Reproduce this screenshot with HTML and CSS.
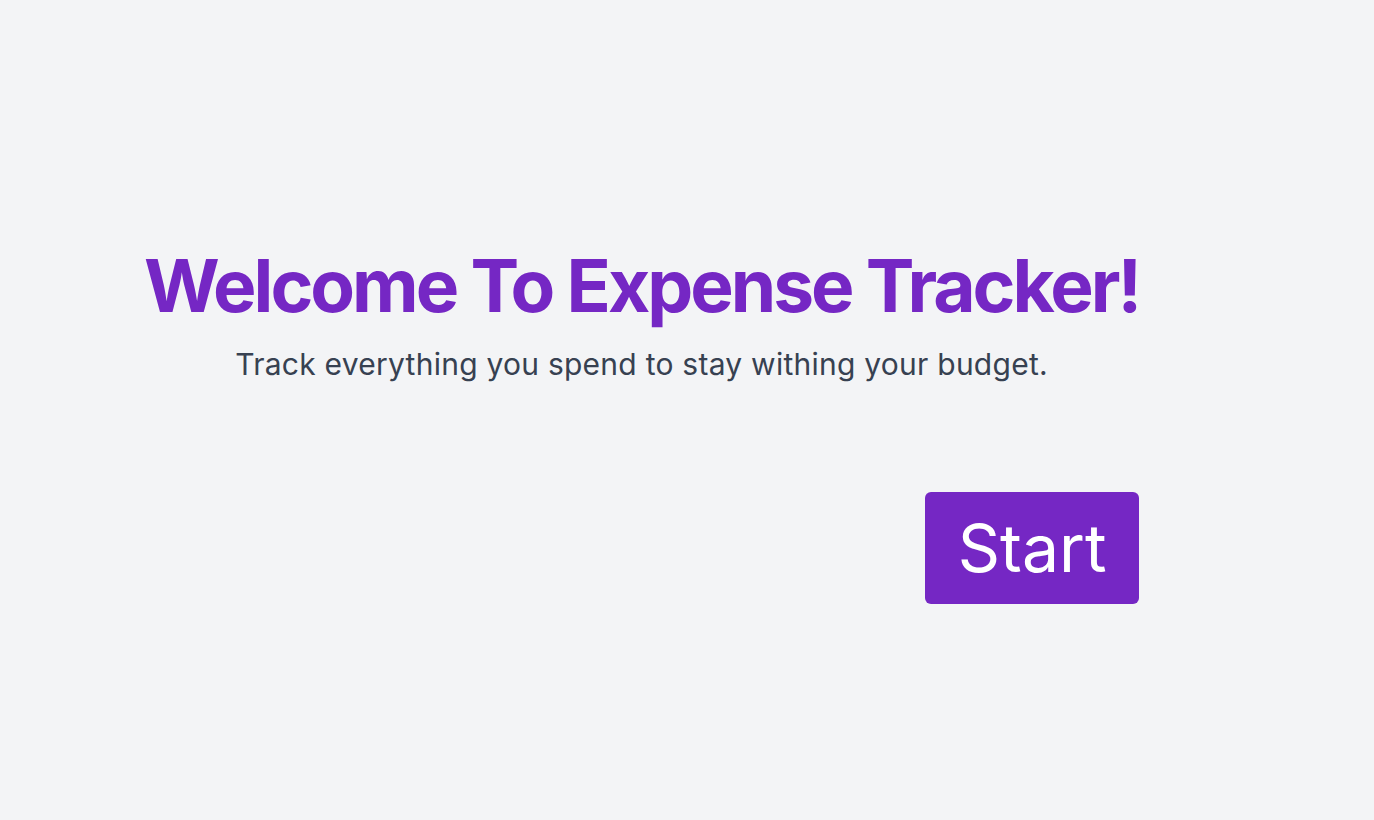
FILE: index.html
```html
<!DOCTYPE html>
<html lang="en">
<head>
<meta charset="utf-8">
<title>Expense Tracker</title>
<link rel="stylesheet" href="styles.css">
</head>
<body>
<main class="page">
  <section class="welcome">
    <h1 class="title">Welcome To Expense Tracker!</h1>
    <p class="subtitle">Track everything you spend to stay withing your budget.</p>
    <div class="actions">
      <button class="start-btn" type="button">Start</button>
    </div>
  </section>
</main>
</body>
</html>
```
FILE: styles.css
```css
html, body {
  margin: 0;
  padding: 0;
}
body {
  background: #f3f4f6;
  font-family: Inter, "Noto Sans", sans-serif;
  min-height: 820px;
}
.page {
  padding: 241px 0 0 144px;
}
.welcome {
  display: inline-flex;
  flex-direction: column;
  align-items: center;
}
.title {
  margin: 0;
  color: #7527c4;
  font-size: 73px;
  font-weight: 700;
  line-height: 90px;
  letter-spacing: -3px;
  white-space: nowrap;
}
.subtitle {
  margin: 13px 0 0;
  color: #374151;
  font-size: 30px;
  line-height: 40px;
  letter-spacing: 0.25px;
}
.actions {
  align-self: stretch;
  display: flex;
  justify-content: flex-end;
  margin-top: 108px;
}
.start-btn {
  width: 214px;
  height: 112px;
  border: none;
  border-radius: 6px;
  background: #7527c4;
  color: #ffffff;
  font-family: Inter, "Noto Sans", sans-serif;
  font-size: 66px;
  font-weight: 400;
  padding: 0;
}
```
